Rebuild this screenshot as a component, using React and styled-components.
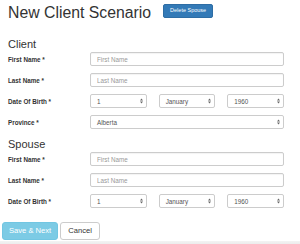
import React from "react"
import styled, { createGlobalStyle } from "styled-components"

const GlobalStyle = createGlobalStyle`
  html, body {
    margin: 0;
    padding: 0;
    background: #fff;
  }
  body {
    font-family: "Liberation Sans", Arial, sans-serif;
    color: #333;
  }
`

const Page = styled.div`
  width: 300px;
  height: 244px;
  overflow: hidden;
  display: flex;
  flex-direction: column;
`

const Content = styled.div`
  padding: 0 16px 0 8px;
`

const TitleRow = styled.div`
  display: flex;
  align-items: center;
  gap: 12px;
  margin-top: 4px;
  height: 17px;
`

const Title = styled.h1`
  margin: 0;
  font-size: 15.8px;
  line-height: 1.1;
  font-weight: 500;
  color: #333;
`

const SmallButton = styled.button`
  font-family: inherit;
  font-size: 5.5px;
  line-height: 1;
  height: 14px;
  width: 50px;
  padding: 0;
  color: #fff;
  background: #337ab7;
  border: 1px solid #2e6da4;
  border-radius: 2px;
  margin-top: -3px;
`

const Section = styled.h3`
  margin: ${(p) => (p.first ? "17px" : "9px")} 0 2px;
  font-size: 11px;
  line-height: 1.1;
  font-weight: 500;
  color: #333;
`

const Row = styled.div`
  display: grid;
  grid-template-columns: 82px 194px;
  align-items: center;
  margin-bottom: 7px;
`

const Label = styled.label`
  font-size: 6.3px;
  font-weight: 700;
  color: #333;
`

const Input = styled.input`
  box-sizing: border-box;
  height: 14px;
  width: 100%;
  margin: 0;
  padding: 0 6px;
  font-family: inherit;
  font-size: 6.3px;
  color: #555;
  border: 1px solid #ccc;
  border-radius: 2px;
  box-shadow: inset 0 1px 1px rgba(0, 0, 0, 0.05);
  outline: none;

  &::placeholder {
    color: #999;
  }
`

const Triple = styled.div`
  display: grid;
  grid-template-columns: repeat(3, 1fr);
  gap: 12px;
`

const SelectBox = styled.div`
  box-sizing: border-box;
  height: 14px;
  display: flex;
  align-items: center;
  justify-content: space-between;
  padding: 0 3px 0 6px;
  font-size: 6.3px;
  color: #555;
  border: 1px solid #ccc;
  border-radius: 2px;
  background: #fff;
`

const Footer = styled.div`
  display: flex;
  gap: 2px;
  padding: 0 0 0 2px;
  margin-top: 7px;
`

const BigButton = styled.button`
  box-sizing: border-box;
  height: 18px;
  padding: 0 ${(p) => (p.primary ? "6px" : "7px")};
  font-family: inherit;
  font-size: 7.6px;
  line-height: 1;
  border-radius: 3px;
  color: ${(p) => (p.primary ? "#fff" : "#333")};
  background: ${(p) => (p.primary ? "#7ccbe5" : "#fff")};
  border: 1px solid ${(p) => (p.primary ? "#72c6e2" : "#ccc")};
`

const BottomBar = styled.div`
  flex: 1;
  margin-top: 1px;
  background: linear-gradient(#f3f3f3, #ececec);
`

function Arrows() {
  return (
    <svg width="3" height="6" viewBox="0 0 3 6">
      <path d="M0 2.4 L1.5 0.4 L3 2.4 Z" fill="#666" />
      <path d="M0 3.6 L1.5 5.6 L3 3.6 Z" fill="#666" />
    </svg>
  )
}

function Select({ value }) {
  return (
    <SelectBox>
      <span>{value}</span>
      <Arrows />
    </SelectBox>
  )
}

function NameRows() {
  return (
    <>
      <Row>
        <Label>First Name *</Label>
        <Input placeholder="First Name" />
      </Row>
      <Row>
        <Label>Last Name *</Label>
        <Input placeholder="Last Name" />
      </Row>
      <Row>
        <Label>Date Of Birth *</Label>
        <Triple>
          <Select value="1" />
          <Select value="January" />
          <Select value="1960" />
        </Triple>
      </Row>
    </>
  )
}

export default function App() {
  return (
    <Page>
      <GlobalStyle />
      <Content>
        <TitleRow>
          <Title>New Client Scenario</Title>
          <SmallButton>Delete Spouse</SmallButton>
        </TitleRow>

        <Section first>Client</Section>
        <NameRows />
        <Row>
          <Label>Province *</Label>
          <Select value="Alberta" />
        </Row>

        <Section>Spouse</Section>
        <NameRows />
      </Content>
      <Footer>
        <BigButton primary>Save &amp; Next</BigButton>
        <BigButton>Cancel</BigButton>
      </Footer>
      <BottomBar />
    </Page>
  )
}
